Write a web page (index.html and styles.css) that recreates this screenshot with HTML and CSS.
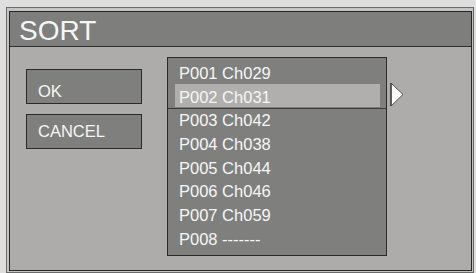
FILE: index.html
```html
<!DOCTYPE html>
<html>
<head>
<meta charset="utf-8">
<link rel="stylesheet" href="styles.css">
</head>
<body>
<div class="frame">
  <div class="dialog">
    <div class="title">SORT</div>
    <div class="content">
      <div class="buttons">
        <div class="btn btn-ok">OK</div>
        <div class="btn btn-cancel">CANCEL</div>
      </div>
      <div class="list">
        <div class="row">P001 Ch029</div>
        <div class="row sel"><div class="hl">P002 Ch031</div></div>
        <div class="row">P003 Ch042</div>
        <div class="row">P004 Ch038</div>
        <div class="row">P005 Ch044</div>
        <div class="row">P006 Ch046</div>
        <div class="row">P007 Ch059</div>
        <div class="row">P008 -------</div>
      </div>
      <svg class="arrow" width="14" height="25" viewBox="0 0 14 25">
        <polygon points="1,1 13,12.5 1,24" fill="#ffffff" stroke="#555555" stroke-width="1"/>
        <line x1="1" y1="1" x2="1" y2="24" stroke="#333333" stroke-width="1.2"/>
      </svg>
    </div>
  </div>
</div>
</body>
</html>
```

FILE: styles.css
```css
html, body {
  margin: 0;
  padding: 0;
}
body {
  background: #dedede;
  width: 476px;
  height: 273px;
  overflow: hidden;
  font-family: "Liberation Sans", Arial, sans-serif;
  color: #f6f6f6;
}
.frame {
  box-sizing: border-box;
  margin: 7px 0 0 6px;
  width: 468px;
  height: 266px;
  border: 1px solid #6a6a6a;
  background: #c4c4c2;
  padding: 3px 1px 1px 2px;
}
.dialog {
  box-sizing: border-box;
  height: 260px;
  border: 1px solid #262626;
  background: #adacaa;
}
.title {
  box-sizing: border-box;
  height: 35px;
  background: #7e7f7d;
  border-bottom: 1px solid #2e2e2e;
  padding: 4px 0 0 9px;
  font-size: 28px;
  line-height: 30px;
}
.content {
  display: flex;
  align-items: flex-start;
  padding: 10px 0 0 16px;
}
.buttons {
  display: flex;
  flex-direction: column;
  gap: 10px;
  margin-top: 12px;
  width: 116px;
}
.btn {
  box-sizing: border-box;
  height: 35px;
  border: 1px solid #2a2a2a;
  background: #7f807e;
  padding-left: 11px;
  font-size: 16.5px;
  line-height: 19px;
}
.btn-ok {
  padding-top: 12px;
}
.btn-cancel {
  padding-top: 7px;
}
.list {
  box-sizing: border-box;
  margin-left: 25px;
  width: 220px;
  height: 199px;
  border: 1px solid #2a2a2a;
  background: #7f807e;
  padding-top: 4px;
  font-size: 16.5px;
}
.row {
  height: 23.67px;
  line-height: 23.67px;
  padding-left: 11px;
  white-space: nowrap;
}
.row.sel {
  box-sizing: border-box;
  display: flex;
  margin-top: -2px;
  height: 25.67px;
  padding: 0 6px 1.33px 7px;
  border-bottom: 1px solid #3a3a3a;
}
.hl {
  flex: 1;
  background: #b0afad;
  padding: 2px 0 0 4px;
  line-height: 23.67px;
}
.arrow {
  display: block;
  margin: 25px 0 0 3px;
}
```
